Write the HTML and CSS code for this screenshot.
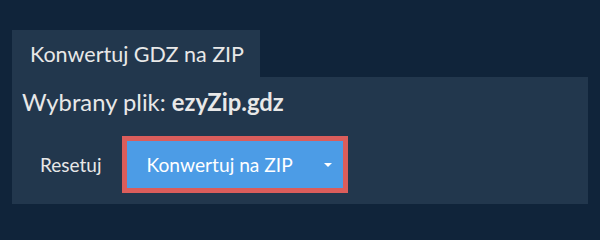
FILE: index.html
```html
<!DOCTYPE html>
<html>
<head>
<meta charset="utf-8">
<link rel="stylesheet" href="styles.css">
</head>
<body>
<div class="wrap">
  <div class="tabs"><div class="tab">Konwertuj GDZ na ZIP</div></div>
  <div class="panel">
    <div class="file">Wybrany plik: <b>ezyZip.gdz</b></div>
    <div class="actions">
      <button class="reset">Resetuj</button>
      <div class="outline">
        <button class="convert"><span>Konwertuj na ZIP</span><span class="caret"></span></button>
      </div>
    </div>
  </div>
</div>
</body>
</html>
```
FILE: styles.css
```css
html, body { margin: 0; padding: 0; }
body {
  background: #10243a;
  font-family: Lato, "Noto Sans", sans-serif;
  color: #e8e8e8;
  width: 600px;
  height: 230px;
  overflow: hidden;
}
.wrap { padding: 30px 12px 0 12px; }
.tabs { display: flex; }
.tab {
  background: #22374d;
  height: 47px;
  width: 248px;
  box-sizing: border-box;
  padding-left: 18px;
  display: flex;
  align-items: center;
  font-size: 21.5px;
}
.panel {
  background: #22374d;
  height: 127px;
  box-sizing: border-box;
  padding: 10px 10px 0 10px;
}
.file { font-size: 23.8px; line-height: 30px; }
.file b { font-weight: 700; }
.actions {
  display: flex;
  align-items: center;
  margin-top: 19px;
}
.reset {
  background: none;
  border: none;
  color: #e8e8e8;
  font-family: inherit;
  font-size: 19px;
  padding: 0 18px;
  height: 48px;
  margin-right: 3px;
}
.outline {
  border: 5px solid #db5d5b;
  display: flex;
}
.convert {
  background: #4c9ce6;
  border: none;
  color: #ffffff;
  font-family: inherit;
  font-size: 19.2px;
  height: 47px;
  width: 216px;
  box-sizing: border-box;
  padding: 0 0 0 19px;
  display: flex;
  align-items: center;
}
.caret {
  margin-left: 31px;
  width: 0; height: 0;
  border-left: 4px solid transparent;
  border-right: 4px solid transparent;
  border-top: 4px solid #ffffff;
}
```
